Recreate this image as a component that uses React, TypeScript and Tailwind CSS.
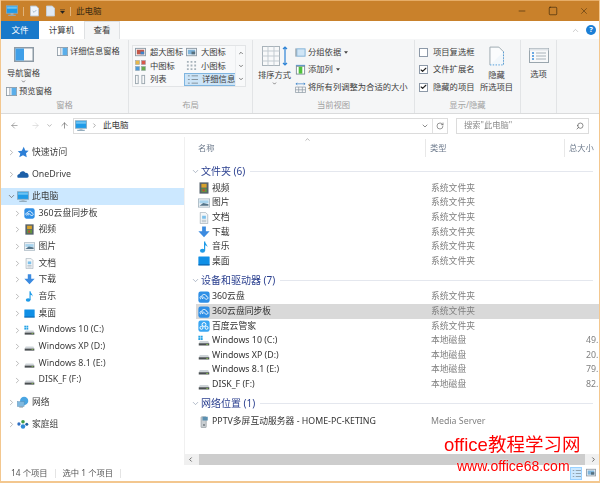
import React from 'react';
import { ArrowLeft, ArrowRight, ArrowUp, Check, ChevronDown, ChevronRight, ChevronUp, RotateCw, Search, Minus, Square, X } from 'lucide-react';

type IconProps = { className?: string };

function Monitor({ className }: IconProps) {
  return (
    <svg viewBox="0 0 16 16" className={className}>
      <rect x="0.5" y="1" width="15" height="10" fill="#1f9be8" stroke="#8fa9bb" />
      <rect x="1.5" y="2" width="13" height="3" fill="#6cc3f2" />
      <rect x="6" y="11" width="4" height="2" fill="#a9b9c4" />
      <rect x="3" y="13" width="10" height="1.6" fill="#8fa9bb" />
    </svg>
  );
}
function VideoIcon({ className }: IconProps) {
  return (
    <svg viewBox="0 0 16 16" className={className}>
      <rect x="2" y="0.5" width="12" height="15" fill="#56626c" />
      <rect x="4.5" y="2.5" width="7" height="5" fill="#d8a22c" />
      <rect x="4.5" y="8.5" width="7" height="5" fill="#5f9c3a" />
      <rect x="6" y="9.5" width="3" height="3" fill="#c2463a" />
    </svg>
  );
}
function PictureIcon({ className }: IconProps) {
  return (
    <svg viewBox="0 0 16 16" className={className}>
      <rect x="0.5" y="2.5" width="15" height="11" fill="#eef2f5" stroke="#9fb0bc" />
      <rect x="2" y="4.5" width="12" height="4" fill="#a8d4ee" />
      <path d="M2 11.5 L7 8 L14 9.5 V11.5 Z" fill="#55758a" />
    </svg>
  );
}
function DocIcon({ className }: IconProps) {
  return (
    <svg viewBox="0 0 16 16" className={className}>
      <path d="M3 0.5 H10 L13 3.5 V15.5 H3 Z" fill="#f3f6f8" stroke="#a6b2ba" />
      <rect x="5.5" y="5" width="5" height="4" fill="#7cc0ea" />
      <path d="M5 11 H11 M5 13 H11" stroke="#a6b2ba" />
    </svg>
  );
}
function DownloadIcon({ className }: IconProps) {
  return (
    <svg viewBox="0 0 16 16" className={className}>
      <path d="M5.5 0.5 H10.5 V7 H15.5 L8 15 L0.5 7 H5.5 Z" fill="#3c8be0" />
    </svg>
  );
}
function MusicIcon({ className }: IconProps) {
  return (
    <svg viewBox="0 0 16 16" className={className}>
      <ellipse cx="6" cy="13" rx="3.4" ry="2.6" fill="#1e9be8" />
      <path d="M8 13 V0.5 H9.6 C9.8 4 13 4.6 12.6 8.4 C12 6.6 10.8 5.8 9.6 5.6 V13 Z" fill="#1e9be8" />
    </svg>
  );
}
function DesktopIcon({ className }: IconProps) {
  return (
    <svg viewBox="0 0 16 16" className={className}>
      <rect x="0.5" y="2" width="15" height="11.5" rx="0.5" fill="#0f8fe6" />
      <rect x="0.5" y="12.5" width="15" height="1.4" fill="#0a5fa8" />
    </svg>
  );
}
function DriveIcon({ windows, className }: IconProps & { windows?: boolean }) {
  return (
    <svg viewBox="0 0 16 16" className={className}>
      {windows && (
        <g fill="#25a3e6">
          <rect x="0.5" y="1" width="2.6" height="2.6" />
          <rect x="3.6" y="1" width="2.6" height="2.6" />
          <rect x="0.5" y="4.1" width="2.6" height="2.6" />
          <rect x="3.6" y="4.1" width="2.6" height="2.6" />
        </g>
      )}
      <path d="M2.5 8 H13.5 L15 11 H1 Z" fill="#cfd5d9" />
      <rect x="1" y="11" width="14" height="3" fill="#4a4f52" />
      <rect x="11" y="12" width="2.5" height="1" fill="#8fd14f" />
    </svg>
  );
}
function CloudBadge({ className }: IconProps) {
  return (
    <svg viewBox="0 0 16 16" className={className}>
      <rect x="0.5" y="0.5" width="15" height="15" rx="3" fill="#2f8fe6" />
      <path d="M4 11 C1.8 10 2.6 6.6 5 7 C6 3.6 11 4 11.2 7.2 C14 7.2 14 11 11.4 11 C9.4 11 8 7.6 6 8 C4 8.6 5 10.4 7 10" fill="none" stroke="#fff" strokeWidth="1.2" />
    </svg>
  );
}
function BaiduIcon({ className }: IconProps) {
  return (
    <svg viewBox="0 0 16 16" className={className}>
      <rect x="0.5" y="0.5" width="15" height="15" rx="3" fill="#3aa6f2" />
      <circle cx="8" cy="6" r="2.6" fill="none" stroke="#fff" strokeWidth="1.3" />
      <circle cx="4.6" cy="10.4" r="2" fill="none" stroke="#fff" strokeWidth="1.3" />
      <circle cx="11.4" cy="10.4" r="2" fill="none" stroke="#fff" strokeWidth="1.3" />
    </svg>
  );
}
function StarIcon({ className }: IconProps) {
  return (
    <svg viewBox="0 0 16 16" className={className}>
      <path d="M9 1 L11 6 L15.5 6.4 L12 9.6 L13 15 L8 12.2 L3 15 L4.4 10 L1 7 L6.4 6.4 Z" fill="#2c7fd6" />
    </svg>
  );
}
function OneDriveIcon({ className }: IconProps) {
  return (
    <svg viewBox="0 0 16 16" className={className}>
      <path d="M1 13 C-0.5 10.5 1 8 3.4 8 C4 4.4 9 3 11 6.4 C13.6 5.8 15.6 8 15.4 10 C15.8 11.4 15 13 13.6 13 Z" fill="#1c5fa8" />
    </svg>
  );
}
function NetworkIcon({ className }: IconProps) {
  return (
    <svg viewBox="0 0 16 16" className={className}>
      <circle cx="9.5" cy="6.5" r="5.5" fill="#4aa5e2" />
      <rect x="0.5" y="7.5" width="9" height="6.5" fill="#7fb8df" stroke="#5c8fb3" strokeWidth="0.6" />
      <rect x="3" y="14" width="5" height="1.4" fill="#8a9aa5" />
    </svg>
  );
}
function HomegroupIcon({ className }: IconProps) {
  return (
    <svg viewBox="0 0 16 16" className={className}>
      <circle cx="2.6" cy="8" r="2.2" fill="#2f6fc2" />
      <circle cx="8" cy="5" r="2.4" fill="#3c9a46" />
      <circle cx="8" cy="11.4" r="3" fill="#2d8ad8" />
      <circle cx="13" cy="8.4" r="2" fill="#1f5f9e" />
    </svg>
  );
}
function ServerIcon({ className }: IconProps) {
  return (
    <svg viewBox="0 0 16 16" className={className}>
      <rect x="4" y="1" width="7" height="14.5" rx="1" fill="#c9ced2" stroke="#80888e" strokeWidth="0.7" />
      <rect x="6" y="1" width="7" height="5" fill="#5a8fb0" />
      <circle cx="8" cy="12" r="1.2" fill="#6a7278" />
    </svg>
  );
}

// small ribbon glyphs
function PaneIcon({ side, className }: IconProps & { side: 'left' | 'right' }) {
  return (
    <svg viewBox="0 0 20 15" preserveAspectRatio="none" className={className}>
      <rect x="0.75" y="0.75" width="18.5" height="13.5" fill="#fafbfc" stroke="#8d9aa5" strokeWidth="1.5" />
      {side === 'left' && <rect x="1.5" y="1.5" width="8.5" height="12" fill="#3f9fe8" />}
      {side === 'right' && (
        <>
          <rect x="10" y="1.5" width="8.5" height="12" fill="#5aaeea" />
          <path d="M7 1.5V13.5" stroke="#8d9aa5" strokeWidth="1.5" />
        </>
      )}
    </svg>
  );
}
function ThumbIcon({ kind, className }: IconProps & { kind: 'xl' | 'l' | 'm' | 's' | 'list' | 'detail' }) {
  return (
    <svg viewBox="0 0 12 12" className={className}>
      {(kind === 'xl' || kind === 'l') && (
        <>
          <rect x="0.5" y="1.5" width="11" height="8" fill="#f2f4f6" stroke="#8d9aa5" />
          <rect x="2" y="3" width="8" height="5" fill={kind === 'xl' ? '#c2584a' : '#7fb4da'} />
          <rect x="6" y="5" width="4" height="3" fill={kind === 'xl' ? '#3d83c9' : '#56707f'} />
        </>
      )}
      {kind === 'm' && (
        <g>
          <rect x="0.5" y="0.5" width="4.5" height="4.5" fill="#e7b84a" stroke="#9aa6ae" strokeWidth="0.6" />
          <rect x="7" y="0.5" width="4.5" height="4.5" fill="#d9574a" stroke="#9aa6ae" strokeWidth="0.6" />
          <rect x="0.5" y="7" width="4.5" height="4.5" fill="#4a9ad9" stroke="#9aa6ae" strokeWidth="0.6" />
          <rect x="7" y="7" width="4.5" height="4.5" fill="#69ab4c" stroke="#9aa6ae" strokeWidth="0.6" />
        </g>
      )}
      {kind === 's' && (
        <path d="M1 1h2v2H1zM5 1h2v2H5zM9 1h2v2H9zM1 5h2v2H1zM5 5h2v2H5zM9 5h2v2H9zM1 9h2v2H1zM5 9h2v2H5zM9 9h2v2H9z" fill="#a7b3bb" />
      )}
      {kind === 'list' && (
        <g fill="none" stroke="#9aa6ae">
          <rect x="0.5" y="1.5" width="3" height="9" />
          <rect x="7.5" y="1.5" width="3" height="9" />
        </g>
      )}
      {kind === 'detail' && (
        <path d="M1 2h2M1 6h2M1 10h2M5 2h7M5 6h7M5 10h7" stroke="#7f8d97" />
      )}
    </svg>
  );
}
function SortIcon({ className }: IconProps) {
  return (
    <svg viewBox="0 0 26 20" className={className}>
      <rect x="0.5" y="0.5" width="17" height="19" fill="#f8f9fa" stroke="#a9b3ba" />
      <path d="M0.5 5h17M0.5 10h17M0.5 15h17M6 0.5v19M12 0.5v19" stroke="#c3cbd1" />
      <path d="M23 1v18M21 3l2-2 2 2M21 17l2 2 2-2" fill="none" stroke="#2f84d6" strokeWidth="1.2" />
    </svg>
  );
}
function GroupIcon({ kind, className }: IconProps & { kind: 'group' | 'add' | 'fit' }) {
  return (
    <svg viewBox="0 0 12 12" className={className}>
      {kind === 'group' && (
        <>
          <rect x="2" y="2" width="9" height="8" fill="#cfe5f6" stroke="#7fb0d6" />
          <path d="M1 1.5v9" stroke="#7f8d97" />
        </>
      )}
      {kind === 'add' && (
        <>
          <path d="M1 1.5h10" stroke="#3d83c9" />
          <rect x="1.5" y="2.5" width="9" height="8.5" fill="#fff" stroke="#7f8d97" />
          <rect x="4" y="3" width="4" height="7.5" fill="#4fc23c" />
        </>
      )}
      {kind === 'fit' && (
        <>
          <path d="M1 2h10M1 2l1.5-1M1 2l1.5 1M11 2l-1.5-1M11 2l-1.5 1" fill="none" stroke="#3d83c9" strokeWidth="0.8" />
          <path d="M0.5 5.5h11v6h-11zM4 5.5v6M8 5.5v6M0.5 8.5h11" fill="none" stroke="#8d9aa5" strokeWidth="0.8" />
        </>
      )}
    </svg>
  );
}
function HideIcon({ className }: IconProps) {
  return (
    <svg viewBox="0 0 16 20" className={className}>
      <path d="M1 19.5 V0.5 H10.5 L15.5 5.5 V19.5" fill="#fbfcfd" stroke="#9aa6ae" />
      <path d="M1 19.5 L15.5 5.5 V19.5 Z" fill="#f2f7fb" />
      <path d="M1 19.5 H15.5 V5.5" fill="none" stroke="#4a9ad9" strokeDasharray="1.5 1.5" />
    </svg>
  );
}
function OptionsIcon({ className }: IconProps) {
  return (
    <svg viewBox="0 0 20 15" className={className}>
      <rect x="0.5" y="0.5" width="19" height="14" fill="#f8f9fa" stroke="#9aa6ae" />
      <rect x="0.5" y="0.5" width="19" height="2" fill="#dfe4e8" />
      <path d="M3 5h2M3 8h2M3 11h2" stroke="#3d8edb" strokeWidth="1.4" />
      <path d="M7 5h10M7 8h10M7 11h10" stroke="#a8b2b9" />
    </svg>
  );
}

function RibbonGroup({ label, width, children }: { label: string; width: string; children: React.ReactNode }) {
  return (
    <div className={`${width} flex flex-col border-r border-[#e2e4e6]`}>
      <div className="flex-1 flex min-h-0">{children}</div>
      <div className="h-[15px] text-center text-[8.3px] leading-[13px] text-[#a0a0a0]">{label}</div>
    </div>
  );
}

function TreeRow({ icon, label, indent, open, selected }: { icon: React.ReactNode; label: string; indent?: boolean; open?: boolean; selected?: boolean }) {
  return (
    <div className={`flex items-center h-[16.7px] ${selected ? 'bg-[#cce8ff]' : ''}`}>
      <div className={`${indent ? 'ml-[10px]' : 'ml-[4px]'} w-[12px] flex justify-center text-[#a6a6a6]`}>
        {open ? <ChevronDown className="w-[9px] h-[9px] text-[#666]" strokeWidth={2} /> : <ChevronRight className="w-[9px] h-[9px]" strokeWidth={2} />}
      </div>
      <div className={`${indent ? 'w-[11px] h-[11px] ml-[1px]' : 'w-[12px] h-[12px]'} flex-none`}>{icon}</div>
      <span className={`${indent ? 'ml-[3.5px]' : 'ml-[3px]'} whitespace-nowrap`}>{label}</span>
    </div>
  );
}

function GroupHeader({ title, className }: { title: string; className?: string }) {
  return (
    <div className={`flex items-center h-[14.6px] pl-[6px] pr-[6px] ${className ?? ''}`}>
      <ChevronDown className="w-[9px] h-[9px] text-[#7a8aa0] flex-none" strokeWidth={1.5} />
      <span className="ml-[1px] text-[10px] text-[#2a3f8f] whitespace-nowrap">{title}</span>
      <div className="ml-[5px] flex-1 h-px bg-[#e4e7ee]" />
    </div>
  );
}

function FileRow({ icon, name, type, size, selected }: { icon: React.ReactNode; name: string; type: string; size?: string; selected?: boolean }) {
  return (
    <div className={`relative flex items-center h-[14.6px] ml-[11px] ${selected ? 'bg-[#d9d9d9]' : ''}`}>
      <div className="w-[12px] h-[12px] ml-[2px] flex-none">{icon}</div>
      <span className="ml-[2px] w-[219px] whitespace-nowrap text-[#333]">{name}</span>
      <span className="w-[155px] text-[#808080] whitespace-nowrap">{type}</span>
      {size && <span className="text-[#808080]">{size}</span>}
    </div>
  );
}

const icon = 'w-full h-full';

export default function App() {
  return (
    <div className="relative w-[600px] h-[483px] overflow-hidden bg-white" style={{ fontFamily: '"Noto Sans", "Noto Sans CJK SC", sans-serif' }}>
      <div className="w-full h-full flex flex-col border-x border-b-2 border-[#f3c78f] text-[8.3px] text-[#3c3c3c] blur-[0.3px]">
        {/* title bar */}
        <div className="h-[21px] flex-none bg-[#c9812b] border-t border-[#e6ad68] flex items-center text-[#3a2a12]">
          <Monitor className="ml-[5px] w-[12px] h-[12px]" />
          <div className="ml-[5px] w-px h-[9px] bg-[#e0b47c]" />
          <svg viewBox="0 0 10 12" className="ml-[6px] w-[9px] h-[12px]"><path d="M0.5 0.5H7L9.5 3V11.5H0.5Z" fill="#eef4fa" stroke="#b8c4cf" /><path d="M3 6l1.5 1.5L7 5" fill="none" stroke="#9ab0c4" /></svg>
          <svg viewBox="0 0 10 12" className="ml-[7px] w-[9px] h-[12px]"><path d="M0.5 0.5H7L9.5 3V11.5H0.5Z" fill="#dfe9f4" stroke="#c4d0dc" /></svg>
          <svg viewBox="0 0 6 6" className="ml-[5px] w-[5px] h-[5px]"><path d="M0 0.5h6M0.5 2.5h5L3 5.5Z" fill="#222" stroke="#222" strokeWidth="0.5" /></svg>
          <div className="ml-[5px] w-px h-[9px] bg-[#e0b47c]" />
          <span className="ml-[5px] text-[8.5px]">此电脑</span>
          <div className="ml-auto flex items-center text-[#2a1c08]">
            <Minus className="w-[10px] h-[10px]" strokeWidth={1.3} />
            <Square className="ml-[21px] w-[10px] h-[10px]" strokeWidth={1.4} />
            <X className="ml-[21px] mr-[10px] w-[10px] h-[10px]" strokeWidth={1.1} />
          </div>
        </div>

        {/* tabs */}
        <div className="h-[18px] flex-none flex items-stretch bg-white text-[8.5px]">
          <div className="w-[38px] bg-[#1979ca] text-white flex items-center justify-center">文件</div>
          <div className="w-[45px] flex items-center justify-center">计算机</div>
          <div className="w-[36px] bg-[#f5f6f7] border-x border-t border-[#dfe1e3] flex items-center justify-center">查看</div>
          <div className="ml-auto flex items-center pr-[3px]">
            <ChevronUp className="w-[9px] h-[9px] text-[#a8a8a8]" strokeWidth={1.5} />
            <div className="ml-[6px] w-[10px] h-[10px] rounded-full bg-[#1c7fd6] text-white flex items-center justify-center text-[7.5px] font-bold">?</div>
          </div>
        </div>

        {/* ribbon */}
        <div className="h-[75px] flex-none flex bg-[#f5f6f7] border-b border-[#dadbdc] pt-[1px]">
          <RibbonGroup label="窗格" width="w-[128px]">
            <div className="w-[45px] flex flex-col items-center pt-[7px]">
              <PaneIcon side="left" className="w-[20px] h-[15px]" />
              <div className="mt-[5px] leading-[12px] whitespace-nowrap">导航窗格</div>
              <ChevronDown className="w-[5px] h-[5px] text-[#444]" strokeWidth={3} />
              <div className="flex items-center ml-[11px] mt-[1px]">
                <PaneIcon side="right" className="w-[11px] h-[9px]" />
                <span className="ml-[2px] whitespace-nowrap">预览窗格</span>
              </div>
            </div>
            <div className="flex items-center h-[14px] mt-[4px] ml-[11px]">
              <PaneIcon side="right" className="w-[11px] h-[9px]" />
              <span className="ml-[2px] whitespace-nowrap">详细信息窗格</span>
            </div>
          </RibbonGroup>

          <RibbonGroup label="布局" width="w-[124px]">
            <div className="ml-[3px] mt-[5px] w-[114px] h-[42px] border border-[#e2e4e6] bg-[#f8f9fa] flex">
              <div className="w-[102px] grid grid-cols-2 grid-rows-3">
                {[
                  { k: 'xl' as const, t: '超大图标' },
                  { k: 'l' as const, t: '大图标' },
                  { k: 'm' as const, t: '中图标' },
                  { k: 's' as const, t: '小图标' },
                  { k: 'list' as const, t: '列表' },
                  { k: 'detail' as const, t: '详细信息' },
                ].map((item) => (
                  <div key={item.t} className={`flex items-center pl-[2px] ${item.k === 'detail' ? 'bg-[#cce4f7] border border-[#7fb5e0] -mr-[1px]' : ''}`}>
                    <ThumbIcon kind={item.k} className="w-[11px] h-[11px] flex-none" />
                    <span className="ml-[4px] whitespace-nowrap">{item.t}</span>
                  </div>
                ))}
              </div>
              <div className="flex-1 flex flex-col items-center justify-around text-[#555] border-l border-[#eceef0]">
                <ChevronUp className="w-[6px] h-[6px]" strokeWidth={3} />
                <ChevronDown className="w-[6px] h-[6px]" strokeWidth={3} />
                <ChevronDown className="w-[6px] h-[6px]" strokeWidth={3} />
              </div>
            </div>
          </RibbonGroup>

          <RibbonGroup label="当前视图" width="w-[162px]">
            <div className="w-[39px] ml-[2px] flex flex-col items-center pt-[6px]">
              <SortIcon className="w-[26px] h-[20px]" />
              <div className="mt-[3px] leading-[12px] whitespace-nowrap">排序方式</div>
              <ChevronDown className="w-[5px] h-[5px] text-[#444]" strokeWidth={3} />
            </div>
            <div className="ml-[1px] pt-[5px] flex flex-col gap-[3.5px]">
              {[
                { k: 'group' as const, t: '分组依据', arrow: true },
                { k: 'add' as const, t: '添加列', arrow: true },
                { k: 'fit' as const, t: '将所有列调整为合适的大小', arrow: false },
              ].map((item) => (
                <div key={item.t} className="flex items-center h-[14px]">
                  <GroupIcon kind={item.k} className="w-[11px] h-[11px]" />
                  <span className="ml-[2px] whitespace-nowrap">{item.t}</span>
                  {item.arrow && <svg viewBox="0 0 6 4" className="ml-[3px] w-[4px] h-[3px]"><path d="M0 0h6L3 4Z" fill="#444" /></svg>}
                </div>
              ))}
            </div>
          </RibbonGroup>

          <RibbonGroup label="显示/隐藏" width="w-[106px]">
            <div className="pl-[4px] pt-[5px] flex flex-col gap-[3.5px]">
              {[
                { t: '项目复选框', on: false },
                { t: '文件扩展名', on: true },
                { t: '隐藏的项目', on: true },
              ].map((item) => (
                <div key={item.t} className="flex items-center h-[14px]">
                  <div className="w-[9px] h-[9px] border border-[#8d99a8] bg-white flex items-center justify-center">
                    {item.on && <Check className="w-[8px] h-[8px] text-[#222]" strokeWidth={4} />}
                  </div>
                  <span className="ml-[5px] whitespace-nowrap">{item.t}</span>
                </div>
              ))}
            </div>
            <div className="ml-[5px] w-[34px] flex flex-col items-center pt-[6px]">
              <HideIcon className="w-[15px] h-[20px]" />
              <div className="mt-[3px] leading-[12px]">隐藏</div>
              <div className="leading-[12px] whitespace-nowrap">所选项目</div>
            </div>
          </RibbonGroup>

          <RibbonGroup label="" width="w-[36px]">
            <div className="w-full flex flex-col items-center pt-[8px]">
              <OptionsIcon className="w-[20px] h-[15px]" />
              <div className="mt-[5px] leading-[12px]">选项</div>
            </div>
          </RibbonGroup>
        </div>

        {/* address row */}
        <div className="h-[23px] flex-none flex items-center bg-white">
          <ArrowLeft className="ml-[9px] w-[9px] h-[9px] text-[#777]" strokeWidth={1.6} />
          <ArrowRight className="ml-[12px] w-[9px] h-[9px] text-[#cfcfcf]" strokeWidth={1.6} />
          <ChevronDown className="ml-[6px] w-[7px] h-[7px] text-[#888]" strokeWidth={2} />
          <ArrowUp className="ml-[7px] w-[9px] h-[9px] text-[#666]" strokeWidth={1.8} />
          <div className="ml-[4px] w-[375px] h-[16px] flex items-center border border-[#dcdcdc]">
            <Monitor className="w-[12px] h-[12px] ml-[1px]" />
            <ChevronRight className="ml-[4px] w-[7px] h-[7px] text-[#777]" strokeWidth={2} />
            <span className="ml-[5px] text-[8.5px]">此电脑</span>
            <div className="ml-auto flex items-center h-full">
              <ChevronDown className="w-[8px] h-[8px] text-[#555]" strokeWidth={2} />
              <div className="ml-[3px] w-px h-full bg-[#e0e0e0]" />
              <RotateCw className="mx-[3px] w-[8px] h-[8px] text-[#555]" strokeWidth={1.8} />
            </div>
          </div>
          <div className="ml-[8px] w-[133px] h-[16px] flex items-center border border-[#dcdcdc] pl-[7px] text-[#8a8a8a]">
            搜索"此电脑"
            <Search className="ml-auto mr-[4px] w-[8px] h-[8px] text-[#555] -scale-x-100" strokeWidth={2} />
          </div>
        </div>

        {/* body */}
        <div className="flex-1 flex min-h-0">
          <div className="w-[184px] flex-none border-r border-[#f0f0f0] text-[8.8px] pt-[7px]">
            <TreeRow icon={<StarIcon className={icon} />} label="快速访问" />
            <div className="h-[5.4px]" />
            <TreeRow icon={<OneDriveIcon className={icon} />} label="OneDrive" />
            <div className="h-[5.4px]" />
            <TreeRow open selected icon={<Monitor className={icon} />} label="此电脑" />
            <TreeRow indent icon={<CloudBadge className={icon} />} label="360云盘同步板" />
            <TreeRow indent icon={<VideoIcon className={icon} />} label="视频" />
            <TreeRow indent icon={<PictureIcon className={icon} />} label="图片" />
            <TreeRow indent icon={<DocIcon className={icon} />} label="文档" />
            <TreeRow indent icon={<DownloadIcon className={icon} />} label="下载" />
            <TreeRow indent icon={<MusicIcon className={icon} />} label="音乐" />
            <TreeRow indent icon={<DesktopIcon className={icon} />} label="桌面" />
            <TreeRow indent icon={<DriveIcon windows className={icon} />} label="Windows 10 (C:)" />
            <TreeRow indent icon={<DriveIcon className={icon} />} label="Windows XP (D:)" />
            <TreeRow indent icon={<DriveIcon className={icon} />} label="Windows 8.1 (E:)" />
            <TreeRow indent icon={<DriveIcon className={icon} />} label="DISK_F (F:)" />
            <div className="h-[5.4px]" />
            <TreeRow icon={<NetworkIcon className={icon} />} label="网络" />
            <div className="h-[5.4px]" />
            <TreeRow icon={<HomegroupIcon className={icon} />} label="家庭组" />
          </div>

          <div className="flex-1 min-w-0 flex flex-col text-[8.8px] overflow-hidden">
            <div className="relative h-[22px] flex-none flex items-stretch text-[#6d7a8c] text-[8.3px]">
              <div className="w-[241px] pl-[13px] flex items-center border-r border-[#e8e8e8] my-[2px]">名称</div>
              <ChevronUp className="absolute left-[119px] -top-[1px] w-[7px] h-[7px] text-[#888]" strokeWidth={2} />
              <div className="w-[139px] pl-[4px] flex items-center border-r border-[#e8e8e8] my-[2px]">类型</div>
              <div className="pl-[4px] flex items-center whitespace-nowrap my-[2px]">总大小</div>
            </div>
            <div className="flex-1 min-h-0">
              <GroupHeader title="文件夹 (6)" className="mt-[5px] mb-[2.5px]" />
              <FileRow icon={<VideoIcon className={icon} />} name="视频" type="系统文件夹" />
              <FileRow icon={<PictureIcon className={icon} />} name="图片" type="系统文件夹" />
              <FileRow icon={<DocIcon className={icon} />} name="文档" type="系统文件夹" />
              <FileRow icon={<DownloadIcon className={icon} />} name="下载" type="系统文件夹" />
              <FileRow icon={<MusicIcon className={icon} />} name="音乐" type="系统文件夹" />
              <FileRow icon={<DesktopIcon className={icon} />} name="桌面" type="系统文件夹" />
              <GroupHeader title="设备和驱动器 (7)" className="mt-[4.5px] mb-[2px]" />
              <FileRow icon={<CloudBadge className={icon} />} name="360云盘" type="系统文件夹" />
              <FileRow selected icon={<CloudBadge className={icon} />} name="360云盘同步板" type="系统文件夹" />
              <FileRow icon={<BaiduIcon className={icon} />} name="百度云管家" type="系统文件夹" />
              <FileRow icon={<DriveIcon windows className={icon} />} name="Windows 10 (C:)" type="本地磁盘" size="49." />
              <FileRow icon={<DriveIcon className={icon} />} name="Windows XP (D:)" type="本地磁盘" size="20." />
              <FileRow icon={<DriveIcon className={icon} />} name="Windows 8.1 (E:)" type="本地磁盘" size="79." />
              <FileRow icon={<DriveIcon className={icon} />} name="DISK_F (F:)" type="本地磁盘" size="82." />
              <GroupHeader title="网络位置 (1)" className="mt-[4px] mb-[4px]" />
              <FileRow icon={<ServerIcon className={icon} />} name="PPTV多屏互动服务器 - HOME-PC-KETING" type="Media Server" />
            </div>
            <div className="h-[11px] flex-none bg-[#f0f0f0] flex items-center justify-between text-[#555]">
              <ChevronRight className="w-[7px] h-[7px] rotate-180 ml-[2px]" strokeWidth={3} />
              <div className="flex-1 h-full mx-[5px] bg-[#cdcdcd]" />
              <ChevronRight className="w-[7px] h-[7px] mr-[2px]" strokeWidth={3} />
            </div>
          </div>
        </div>

        {/* status bar */}
        <div className="h-[16px] flex-none flex items-center text-[8.3px] text-[#555] pl-[10px]">
          <span className="whitespace-nowrap">14 个项目</span>
          <div className="ml-[7px] w-px h-[9px] bg-[#e4e4e4]" />
          <span className="ml-[7px] whitespace-nowrap">选中 1 个项目</span>
          <div className="ml-[7px] w-px h-[9px] bg-[#e4e4e4]" />
          <div className="ml-auto mr-[3px] flex gap-[3px]">
            <div className="w-[12px] h-[13px] bg-[#cce8ff] border border-[#99d1ff] flex items-center justify-center">
              <ThumbIcon kind="detail" className="w-[9px] h-[9px]" />
            </div>
            <div className="w-[11px] h-[13px] flex items-center justify-center">
              <ThumbIcon kind="l" className="w-[10px] h-[10px]" />
            </div>
          </div>
        </div>
      </div>

      {/* site watermark */}
      <div className="absolute left-[444px] top-[434px] text-[18.5px] leading-[22px] text-[#ff0000] whitespace-nowrap" style={{ fontFamily: '"Liberation Sans", "Noto Sans CJK SC", sans-serif' }}>
        office教程学习网
      </div>
      <div className="absolute left-[457px] top-[457px] text-[14px] leading-[18px] text-[#ff0000] whitespace-nowrap [text-shadow:0_0_2px_#fff]" style={{ fontFamily: '"Liberation Sans", sans-serif' }}>
        www.office68.com
      </div>
    </div>
  );
}
